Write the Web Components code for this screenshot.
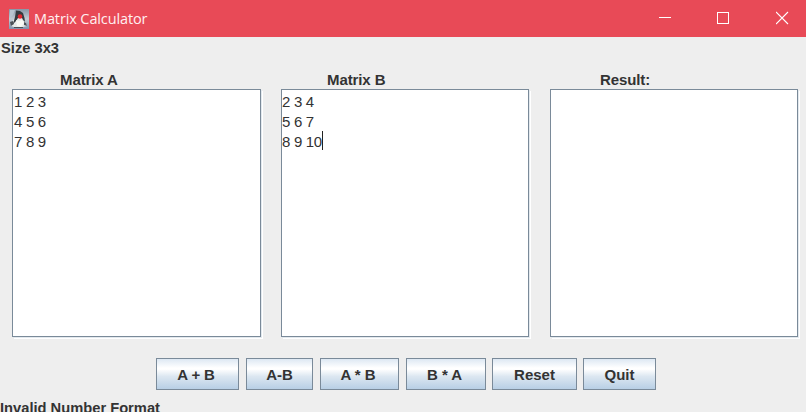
<!DOCTYPE html>
<html lang="en"><head><meta charset="utf-8"><title>Matrix Calculator</title>
<style>body{margin:0;overflow:hidden;background:#eee}</style></head>
<body>
<matrix-window></matrix-window>
<script>
const define=(name,html)=>customElements.define(name,class extends HTMLElement{
  constructor(){super();this.attachShadow({mode:'open'}).innerHTML=html;}
});
define('title-bar',`<style>
:host{display:flex;height:37px;background:#e84a57;color:#fff;font:15px/37px "Open Sans","Noto Sans",sans-serif;align-items:center;box-sizing:border-box;padding-left:9px}
.t{margin-left:5px;flex:1;font-size:14.5px;letter-spacing:-.12px;white-space:nowrap;color:#fff0f1}
svg{display:block;flex:none}
.c{display:grid;grid-template-columns:58px 59px 30px;height:37px;width:147px}
</style>
<svg width="20" height="20" viewBox="0 0 20 20">
<defs><linearGradient id="g" x2="0" y2="1"><stop stop-color="#8796a6"/><stop offset=".5" stop-color="#c3ccd4"/><stop offset="1" stop-color="#7f93ad"/></linearGradient></defs>
<rect width="20" height="20" fill="url(#g)"/>
<path d="M1 1h5L4 6 1 9z" fill="#b9c5d0"/>
<path d="M2 14l4-5 8-1 2 5 2 4-4 1H5l-3-1z" fill="#e6eae9"/>
<path d="M7 1.500l4 .5 3 2 1.500 5 .5 4-2-2-1-2H9l-2 3-3 3 2-7z" fill="#363b40"/>
<path d="M1 13l3-1 1 3-3 2zM15 13l2 1 1 3-3-1zM5 18h9v1H5z" fill="#4b5157"/>
<path d="M7 11l1 6 4 1 3-4-2-3-3 1z" fill="#f8f9f4"/>
<circle cx="11" cy="7.500" r="2.300" fill="#df2830"/></svg>
<span class="t">Matrix Calculator</span>
<div class="c">
<svg width="30" height="37"><path d="M0 17.500h12" stroke="#fff"/></svg>
<svg width="30" height="37"><rect x=".5" y="12.500" width="11" height="11" fill="none" stroke="#fff"/></svg>
<svg width="30" height="37"><path d="M0 12l12 12M12 12L0 24" stroke="#fff" stroke-width="1.100"/></svg>
</div>`);
define('matrix-pane',`<style>
:host{display:block;width:249px}
.h{display:block;height:19px;line-height:19px;padding-left:48px;font-weight:bold;white-space:pre;letter-spacing:-.1px}
:host([wide]) .h{padding-left:50px}
:host([mid]) .h{padding-left:46px}
.b{box-sizing:border-box;height:248px;border:1px solid #7a8a99;background:#fff;box-shadow:1px 1px 0 #e3e9ee,2px 2px 0 #fff;clip-path:inset(0 -2px -2px 0);padding:2px 0 0 1px;line-height:20px;white-space:pre;font-size:15px;letter-spacing:-.3px}
:host([mid]) .b{padding-left:0}
</style><span class="h"><slot name="title"></slot></span><div class="b"><slot></slot></div>`);
define('text-caret',`<style>:host{display:inline-block;width:1px;height:19px;margin-top:-2px;background:#222;vertical-align:-3px}</style>`);
define('metal-button',`<style>
:host{display:block;box-sizing:border-box;height:32px;border:1px solid #7a8a99;background:linear-gradient(#dde8f3 0,#fff 30%,#fff 34%,#dce7f1 58%,#b8cfe5 100%);text-align:center;line-height:31px;font-weight:bold;white-space:nowrap}
:host([left]){padding-right:3px;letter-spacing:-.1px}
</style><slot></slot>`);
define('matrix-window',`<style>
:host{display:flex;flex-direction:column;width:806px;height:412px;overflow:hidden;background:#eee;color:#333;font:15px "Liberation Sans",Arial,sans-serif}
.l{font-weight:bold;white-space:nowrap;height:20px;line-height:22px;padding-left:1px;flex:none;font-size:14.700px}
.s{padding-left:0;line-height:21px}
.p{display:grid;grid-template-columns:249px 248px 248px;column-gap:20px;padding:13px 0 0 12px}
.p>:nth-child(2){width:248px}.p>:nth-child(3){width:248px;margin-left:1px}
.a{display:grid;grid-template-columns:83px 67px 79px 80px 85px 73px;column-gap:7px;padding:21px 0 8px 156px}
.a>:nth-child(n+5){margin-left:-1px;margin-right:1px}
.a>:last-child{margin-left:-2px;margin-right:2px}
title-bar{flex:none}
</style>
<title-bar></title-bar><div class="l">Size 3x3</div>
<div class="p">
<matrix-pane><span slot="title">Matrix A</span>1 2 3
4 5 6
7 8 9</matrix-pane>
<matrix-pane mid><span slot="title">Matrix B</span>2 3 4
5 6 7
8 9 10<text-caret></text-caret></matrix-pane>
<matrix-pane wide><span slot="title">Result:</span></matrix-pane>
</div>
<div class="a"><metal-button left>A + B</metal-button><metal-button>A-B</metal-button><metal-button left>A * B</metal-button><metal-button left>B * A</metal-button><metal-button>Reset</metal-button><metal-button>Quit</metal-button></div>
<div class="l s">Invalid Number Format</div>`);
</script>
</body></html>
